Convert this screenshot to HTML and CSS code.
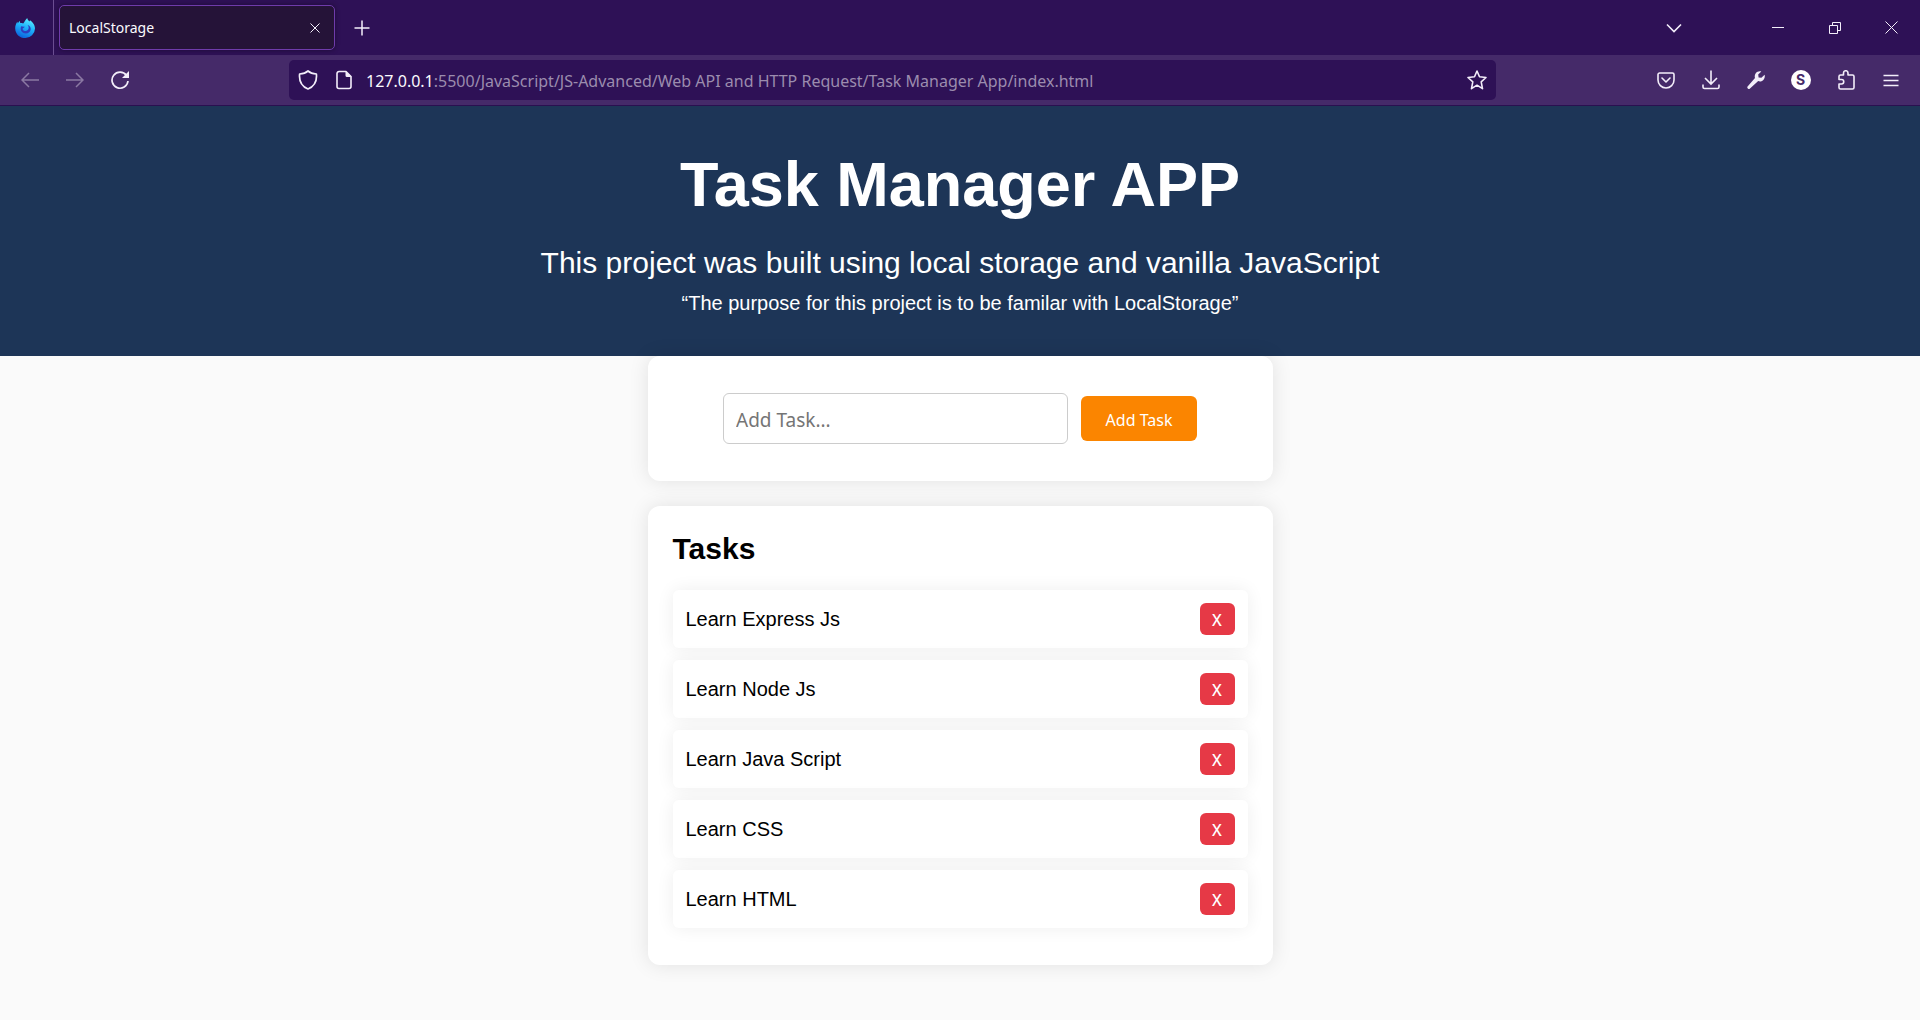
FILE: index.html
```html
<!DOCTYPE html>
<html lang="en">
<head>
<meta charset="utf-8">
<title>LocalStorage</title>
<link rel="stylesheet" href="styles.css">
</head>
<body>
<div class="browser">
  <div class="tabbar">
    <div class="brand">
      <svg width="20" height="20" viewBox="0 0 20 20" aria-hidden="true">
        <defs><linearGradient id="flame" x1="0.7" y1="0" x2="0.3" y2="1"><stop offset="0" stop-color="#5ff0ff"/><stop offset="0.45" stop-color="#1fb4fb"/><stop offset="1" stop-color="#0a5fdc"/></linearGradient></defs>
        <path fill="url(#flame)" d="M12.2 0c.2 1.600 1.200 2.400 2.400 3.600l.4-1.300c2.600 1.600 5 4.700 5 8.200A9.700 9.700 0 0 1 10.200 20C4.700 20 .3 16 .2 10.400.1 7.900 1 5.400 2.400 3.700l.4 1.700 1.700-2.700.8 2.400c1 0 2 .1 2.900.5C9.300 4.200 10.300 2 12.200 0z"/>
        <path fill="#2d3fc0" d="M6.200 8.200c1.200.2 2 .5 3.500.6-.2 1-1.700 1.200-2.200 1.900.3 1.700 1.900 2.600 3.400 2.300 1.800-.3 2.900-1.800 2.800-3.500-.1-1-.5-1.900-1.200-2.400 2.100.4 3.300 2.100 3.200 4.100-.2 2.500-2.200 4.200-4.900 4.200-3 0-5.200-2.200-5.100-4.900 0-.8.200-1.600.5-2.300z"/>
      </svg>
    </div>
    <div class="tab">
      <span class="tab-title">LocalStorage</span>
      <button class="tab-close" aria-label="Close tab"><svg width="10" height="10" viewBox="0 0 10 10"><path d="M.5.5l9 9M9.500.5l-9 9"/></svg></button>
    </div>
    <button class="tool" aria-label="New tab"><svg width="16" height="16" viewBox="0 0 16 16"><path stroke-width="1.500" d="M8 .5v15M.5 8h15"/></svg></button>
    <button class="tool list-tabs" aria-label="List all tabs"><svg width="16" height="10" viewBox="0 0 16 10"><path stroke-width="1.600" d="M1 1.500l7 7 7-7"/></svg></button>
    <div class="window-controls">
      <button class="window-button" aria-label="Minimize"><svg width="12" height="13" viewBox="0 0 12 13"><path d="M0 6.500h12"/></svg></button>
      <button class="window-button" aria-label="Restore"><svg width="12" height="12" viewBox="0 0 12 12"><path d="M.5 3.500h8v8h-8zM3.500 3.500v-3h8v8h-3"/></svg></button>
      <button class="window-button" aria-label="Close"><svg width="13" height="13" viewBox="0 0 13 13"><path d="M.5.5l12 12M12.500.5l-12 12"/></svg></button>
    </div>
  </div>
  <div class="navbar">
    <div class="tools">
      <button class="tool faded" aria-label="Back"><svg width="18" height="16" viewBox="0 0 18 16"><path stroke-width="1.500" d="M8 1L1 8l7 7M1 8h17"/></svg></button>
      <button class="tool faded" aria-label="Forward"><svg width="18" height="16" viewBox="0 0 18 16"><path stroke-width="1.500" d="M10 1l7 7-7 7M17 8H0"/></svg></button>
      <button class="tool" aria-label="Reload"><svg width="20" height="20" viewBox="0 0 20 20"><path stroke-width="1.700" d="M16.500 5.500A8 8 0 1 0 18 11"/><path class="solid" d="M19 1v7h-7z"/></svg></button>
    </div>
    <form class="address">
      <svg width="20" height="20" viewBox="0 0 20 20" aria-hidden="true"><path stroke-width="1.700" stroke-linejoin="round" d="M10 1C8 2.800 4.500 3.800 1.600 4c-.6 6 1.500 12 8.400 15 6.900-3 9-9 8.400-15C15.500 3.800 12 2.800 10 1z"/></svg>
      <svg class="page-icon" width="16" height="20" viewBox="0 0 16 20" aria-hidden="true"><path stroke-width="1.600" stroke-linejoin="round" d="M10 1.500H3A2 2 0 0 0 1 3.500v13a2 2 0 0 0 2 2h10a2 2 0 0 0 2-2V6.500z"/><path class="solid" d="M9.500 1l6 6h-4.500a1.500 1.500 0 0 1-1.500-1.500z"/></svg>
      <label class="host" for="url">127.0.0.1</label>
      <input class="url" id="url" type="text" value=":5500/JavaScript/JS-Advanced/Web API and HTTP Request/Task Manager App/index.html">
      <button class="bookmark" type="button" aria-label="Bookmark this page"><svg width="20" height="20" viewBox="0 0 20 20"><path stroke-width="1.600" stroke-linejoin="round" d="M10 1l2.500 5.800 6.500.7-4.800 4.300 1.300 6.900L10 15.200l-5.500 3.500 1.300-6.900L1 7.500l6.500-.7z"/></svg></button>
    </form>
    <div class="tools">
      <button class="tool" aria-label="Save to Pocket"><svg width="18" height="17" viewBox="0 0 18 17"><path stroke-width="1.600" d="M2.600 1h12.800A1.600 1.600 0 0 1 17 2.600V8A8 8 0 0 1 1 8V2.600A1.600 1.600 0 0 1 2.600 1z"/><path stroke-width="1.600" stroke-linecap="round" stroke-linejoin="round" d="M5 6l4 4 4-4"/></svg></button>
      <button class="tool" aria-label="Downloads"><svg width="18" height="20" viewBox="0 0 18 20"><path stroke-width="1.600" d="M9 .5V14M3 8l6 6 6-6M1 14.500V17a1.500 1.500 0 0 0 1.500 1.500h13A1.500 1.500 0 0 0 17 17v-2.500"/></svg></button>
      <button class="tool" aria-label="Developer tools"><svg width="18" height="18" viewBox="0 0 18 18"><path class="solid" d="M14.300.5l-3.100 3.100.4 2.800 2.800.4L17.600 3.700c.8 2.800-.6 5.700-3.100 6.500-1.100.4-2.300.3-3.300-.1L3 17.400a1.500 1.500 0 0 1-2.200-2.200L8 7.100C7.200 4.700 8.200 1.900 10.500.8c1.200-.6 2.600-.7 3.800-.3z"/></svg></button>
      <button class="tool" aria-label="Account"><span class="avatar">S</span></button>
      <button class="tool" aria-label="Extensions"><svg width="18" height="20" viewBox="0 0 18 20"><path stroke-width="1.600" stroke-linejoin="round" d="M6.500 5V3a2 2 0 0 1 4.500 0v2h4.500A1.500 1.500 0 0 1 17 6.500v11a1.500 1.500 0 0 1-1.500 1.500h-12A1.500 1.500 0 0 1 2 17.500V14H4.500a2 2 0 0 0 0-4.500H2V6.500A1.500 1.500 0 0 1 3.500 5z"/></svg></button>
      <button class="tool" aria-label="Menu"><svg width="16" height="13" viewBox="0 0 16 13"><path stroke-width="1.500" d="M.5 1.500h15M.5 6.500h15M.5 11.500h15"/></svg></button>
    </div>
  </div>
</div>

<header class="hero">
  <h1>Task Manager APP</h1>
  <p class="lead">This project was built using local storage and vanilla JavaScript</p>
  <p class="purpose">“The purpose for this project is to be familar with LocalStorage”</p>
</header>

<main class="content">
  <form class="card add-form">
    <input class="task-input" type="text" placeholder="Add Task..." aria-label="Add Task">
    <button class="add-button" type="button">Add Task</button>
  </form>
  <section class="card tasks">
    <h2>Tasks</h2>
    <ul class="task-list">
      <li class="task"><span>Learn Express Js</span><button class="delete" aria-label="Delete Learn Express Js">X</button></li>
      <li class="task"><span>Learn Node Js</span><button class="delete" aria-label="Delete Learn Node Js">X</button></li>
      <li class="task"><span>Learn Java Script</span><button class="delete" aria-label="Delete Learn Java Script">X</button></li>
      <li class="task"><span>Learn CSS</span><button class="delete" aria-label="Delete Learn CSS">X</button></li>
      <li class="task"><span>Learn HTML</span><button class="delete" aria-label="Delete Learn HTML">X</button></li>
    </ul>
  </section>
</main>
</body>
</html>
```
FILE: styles.css
```css
* {
  box-sizing: border-box;
  margin: 0;
  padding: 0;
}

body {
  min-height: 100vh;
  background: #fafafa;
  color: #000;
  font-family: "Liberation Sans", Arial, sans-serif;
  font-size: 20px;
  line-height: 24px;
}

button,
input {
  border: 0;
  font-family: "Noto Sans", "Segoe UI", sans-serif;
}

button {
  background: none;
}

/* Browser chrome */
.browser {
  color: #fbfbfe;
  font-family: "Noto Sans", "Segoe UI", sans-serif;
  border-bottom: 1px solid #2a1050;
}

.browser svg {
  display: block;
  flex: none;
  fill: none;
  stroke: #f3eefa;
}

.browser .solid {
  fill: #f3eefa;
  stroke: none;
}

.tabbar {
  display: flex;
  align-items: center;
  height: 55px;
  background: #2e1156;
}

.brand {
  display: flex;
  align-items: center;
  justify-content: flex-end;
  align-self: stretch;
  width: 54px;
  padding-right: 18px;
  border-right: 1px solid #6b4e91;
}

.browser .brand svg {
  stroke: none;
}

.tab {
  display: flex;
  align-items: center;
  justify-content: space-between;
  width: 276px;
  height: 45px;
  margin: 0 4px 0 5px;
  padding: 0 10px 0 9px;
  border: 1px solid #6f3bab;
  border-radius: 5px;
  background: #251338;
  box-shadow: 0 0 5px rgba(0, 0, 0, 0.4);
}

.tab-title {
  font-size: 14px;
}

.tab-close {
  display: grid;
  place-items: center;
  width: 18px;
  height: 18px;
}

.tool {
  display: grid;
  place-items: center;
  width: 45px;
  height: 40px;
}

.faded {
  opacity: 0.4;
}

.list-tabs {
  margin-left: auto;
  margin-right: 53px;
}

.window-controls {
  display: flex;
}

.window-button {
  display: grid;
  place-items: center;
  width: 57px;
  height: 40px;
}

.navbar {
  display: flex;
  align-items: center;
  justify-content: space-between;
  gap: 147px;
  height: 50px;
  padding: 0 7px;
  background: #452a69;
}

.tools {
  display: flex;
}

.address {
  display: flex;
  align-items: center;
  flex: 1;
  height: 40px;
  padding: 0 9px;
  border-radius: 5px;
  background: #2e1156;
}

.page-icon {
  margin: 0 14px 0 18px;
}

.host,
.url {
  padding-top: 2px;
  font-size: 16px;
  line-height: 24px;
}

.url {
  flex: 1;
  min-width: 0;
  background: none;
  color: #9b8cae;
}

.avatar {
  width: 20px;
  border-radius: 50%;
  background: #fff;
  color: #452a69;
  font-family: Inter, sans-serif;
  font-size: 14px;
  font-weight: 700;
  line-height: 20px;
}

/* Page */
.hero {
  padding: 42px 20px 41px;
  background: #1d3557;
  color: #fff;
  text-align: center;
}

h1 {
  font-size: 63px;
  line-height: 72px;
}

.lead {
  margin: 25px 0 10px;
  font-size: 30px;
  line-height: 36px;
}

.content {
  display: flex;
  flex-direction: column;
  gap: 25px;
  max-width: 625px;
  margin: 0 auto;
  padding-bottom: 50px;
}

.card {
  border-radius: 12px;
  background: #fff;
  box-shadow: 0 0 20px rgba(0, 0, 0, 0.1);
}

.add-form {
  display: flex;
  align-items: center;
  justify-content: center;
  gap: 13px;
  padding: 37px 25px;
}

.task-input {
  width: 345px;
  height: 51px;
  padding: 2px 12px 0;
  border: 1px solid #ccc;
  border-radius: 6px;
  font-size: 19px;
}

.task-input::placeholder {
  color: #757575;
}

.add-button {
  width: 116px;
  height: 45px;
  padding-top: 2px;
  border-radius: 6px;
  background: #fb8500;
  color: #fff;
  font-size: 16px;
}

.tasks {
  padding: 25px 25px 37px;
}

h2 {
  margin-bottom: 23px;
  font-size: 30px;
  line-height: 36px;
}

.task-list {
  display: flex;
  flex-direction: column;
  gap: 12px;
  list-style: none;
}

.task {
  display: flex;
  align-items: center;
  justify-content: space-between;
  height: 58px;
  padding: 0 13px;
  border-radius: 6px;
  background: #fff;
  box-shadow: 0 0 18px rgba(0, 0, 0, 0.07);
}

.delete {
  width: 35px;
  height: 32px;
  padding-top: 2px;
  border-radius: 6px;
  background: #e63946;
  color: #fff;
  font-size: 16px;
  font-weight: 500;
}
```
